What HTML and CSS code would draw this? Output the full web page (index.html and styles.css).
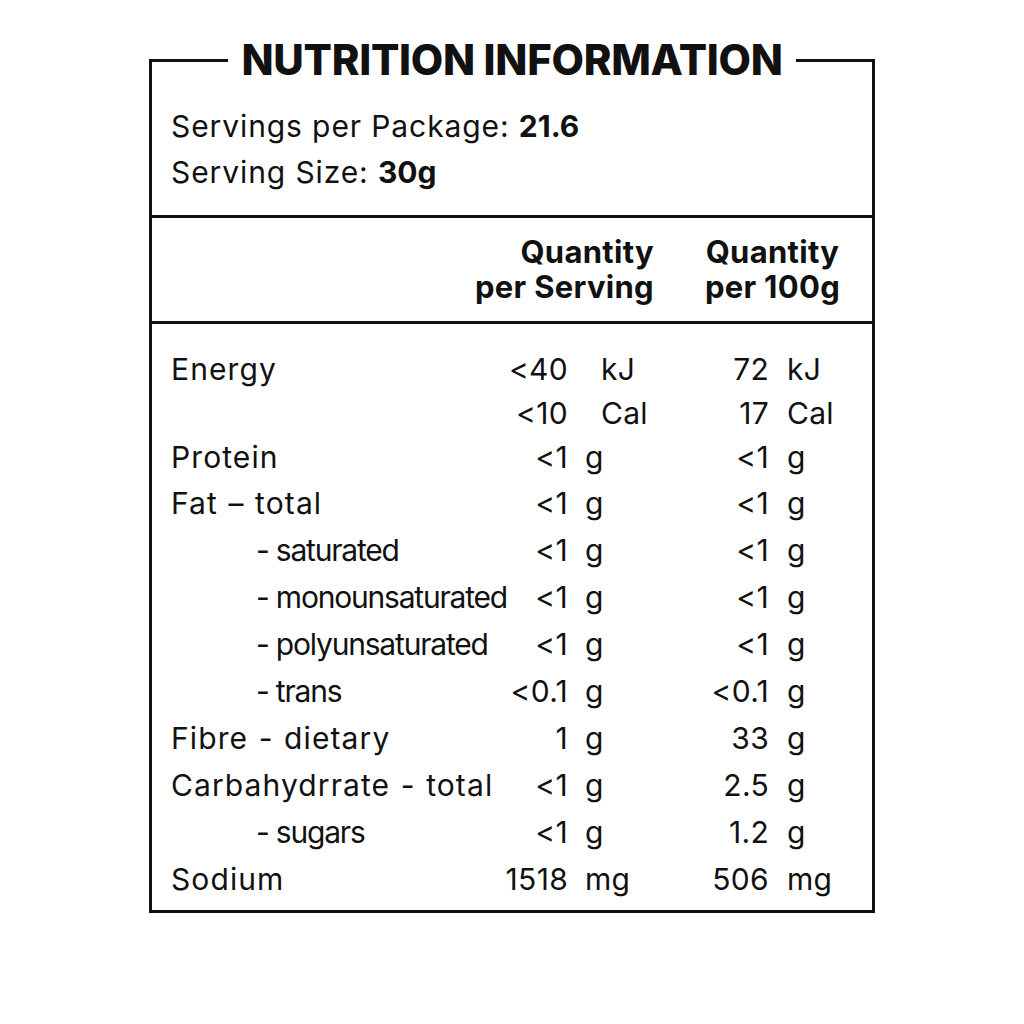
FILE: index.html
```html
<!DOCTYPE html>
<html lang="en">
<head>
<meta charset="utf-8">
<title>Nutrition Information</title>
<link rel="stylesheet" href="styles.css">
</head>
<body>
<div class="label">
  <div class="title"><h1>NUTRITION INFORMATION</h1></div>
  <div class="panel">
    <section class="servings">
      <p>Servings per Package: <b>21.6</b></p>
      <p>Serving Size: <b>30g</b></p>
    </section>
    <section class="head">
      <div class="h1col">Quantity<br>per Serving</div>
      <div class="h2col">Quantity<br>per 100g</div>
    </section>
    <section class="rows">
      <span class="lbl">Energy</span><span class="v1">&lt;40</span><span class="u1 wide">kJ</span><span class="v2">72</span><span class="u2">kJ</span>
      <span class="lbl"></span><span class="v1">&lt;10</span><span class="u1 wide">Cal</span><span class="v2">17</span><span class="u2">Cal</span>
      <span class="lbl">Protein</span><span class="v1">&lt;1</span><span class="u1">g</span><span class="v2">&lt;1</span><span class="u2">g</span>
      <span class="lbl">Fat – total</span><span class="v1">&lt;1</span><span class="u1">g</span><span class="v2">&lt;1</span><span class="u2">g</span>
      <span class="lbl sub">- saturated</span><span class="v1">&lt;1</span><span class="u1">g</span><span class="v2">&lt;1</span><span class="u2">g</span>
      <span class="lbl sub">- monounsaturated</span><span class="v1">&lt;1</span><span class="u1">g</span><span class="v2">&lt;1</span><span class="u2">g</span>
      <span class="lbl sub">- polyunsaturated</span><span class="v1">&lt;1</span><span class="u1">g</span><span class="v2">&lt;1</span><span class="u2">g</span>
      <span class="lbl sub">- trans</span><span class="v1">&lt;0.1</span><span class="u1">g</span><span class="v2">&lt;0.1</span><span class="u2">g</span>
      <span class="lbl">Fibre - dietary</span><span class="v1">1</span><span class="u1">g</span><span class="v2">33</span><span class="u2">g</span>
      <span class="lbl">Carbahydrrate - total</span><span class="v1">&lt;1</span><span class="u1">g</span><span class="v2">2.5</span><span class="u2">g</span>
      <span class="lbl sub">- sugars</span><span class="v1">&lt;1</span><span class="u1">g</span><span class="v2">1.2</span><span class="u2">g</span>
      <span class="lbl">Sodium</span><span class="v1">1518</span><span class="u1">mg</span><span class="v2">506</span><span class="u2">mg</span>
    </section>
  </div>
</div>
</body>
</html>
```

FILE: styles.css
```css
html, body {
  margin: 0;
  padding: 0;
  background: #ffffff;
}
body {
  font-family: Inter, Lato, "Liberation Sans", sans-serif;
  color: #111111;
  padding: 38px 0 0 149px;
}
.label {
  width: 726px;
}
.title {
  display: flex;
  height: 44px;
}
.title::before,
.title::after {
  content: "";
  flex: 1;
  margin-top: 21px;
  border-top: 3px solid #111111;
}
.title::before {
  border-left: 3px solid #111111;
}
.title::after {
  border-right: 3px solid #111111;
}
.title h1 {
  margin: 0;
  padding: 0 13px;
  font-size: 42px;
  line-height: 44px;
  font-weight: 800;
  letter-spacing: -0.3px;
}
.panel {
  border: 3px solid #111111;
  border-top: none;
}
.servings {
  padding: 21px 0 20px 19px;
}
.servings p {
  margin: 0;
  font-size: 30px;
  line-height: 46px;
  letter-spacing: 0.9px;
}
.servings b {
  font-weight: 700;
  letter-spacing: 0;
}
.head {
  border-top: 3px solid #111111;
  border-bottom: 3px solid #111111;
  padding: 16px 0 17px 19px;
  display: grid;
  grid-template-columns: 483px 165px;
  column-gap: 36px;
  font-size: 31px;
  line-height: 35px;
  font-weight: 700;
  letter-spacing: 0.3px;
}
.h1col {
  text-align: right;
}
.h2col {
  text-align: center;
}
.rows {
  padding: 23px 0 8px 19px;
  display: grid;
  grid-template-columns: 300px 97px 122px 79px 1fr;
  grid-template-rows: 44px 44px 44px repeat(9, 47px);
  align-items: center;
  font-size: 30px;
  line-height: 40px;
  letter-spacing: 0.3px;
}
.lbl {
  white-space: nowrap;
  letter-spacing: 1.1px;
  word-spacing: 1px;
}
.sub {
  padding-left: 85px;
  letter-spacing: -1.2px;
  word-spacing: 0;
}
.v1, .v2 {
  text-align: right;
}
.u1 {
  padding-left: 17px;
}
.u1.wide {
  padding-left: 33px;
}
.u2 {
  padding-left: 18px;
}
```
